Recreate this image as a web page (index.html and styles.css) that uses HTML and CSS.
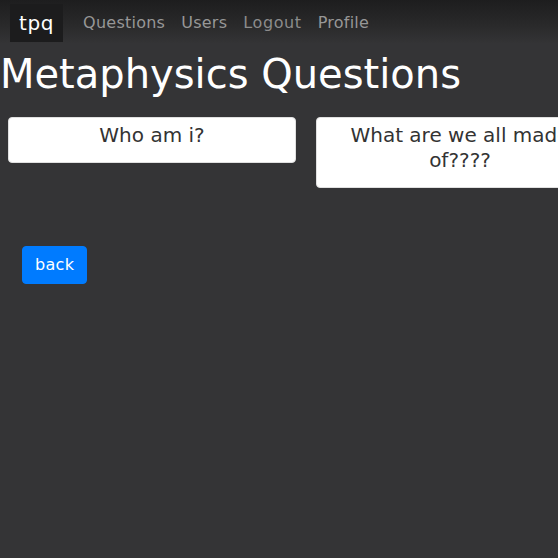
FILE: index.html
```html
<!DOCTYPE html>
<html>
<head>
<meta charset="utf-8">
<title>tpq</title>
<link rel="stylesheet" href="styles.css">
</head>
<body>
<nav class="navbar">
  <a class="brand" href="#">tpq</a>
  <ul class="nav">
    <li><a class="nav-link strong" href="#">Questions</a></li>
    <li><a class="nav-link strong" href="#">Users</a></li>
    <li><a class="nav-link light" href="#">Logout</a></li>
    <li><a class="nav-link strong" href="#">Profile</a></li>
  </ul>
</nav>
<h1 class="title">Metaphysics Questions</h1>
<div class="cards">
  <div class="card">Who am i?</div>
  <div class="card">What are we all made of????</div>
</div>
<div class="actions">
  <a class="btn" href="#">back</a>
</div>
</body>
</html>
```
FILE: styles.css
```css
html {
  overflow: hidden;
  background: #343436;
}
body {
  margin: 0;
  min-height: 558px;
  background: #343436;
  font-family: "DejaVu Sans", sans-serif;
  color: #fff;
}
.navbar {
  height: 44px;
  display: flex;
  align-items: center;
  padding: 0 10px;
  background: linear-gradient(to bottom, #1d1d1e 0%, #2a2a2b 60%, #343436 100%);
}
.brand {
  display: block;
  margin-top: 2px;
  padding: 7px 9px;
  background: #1c1c1d;
  color: #fff;
  text-decoration: none;
  font-size: 20px;
  line-height: 24px;
  letter-spacing: 0.6px;
}
.nav {
  display: flex;
  list-style: none;
  margin: 2px 0 0 12px;
  padding: 0;
}
.nav-link {
  display: block;
  padding: 8px 8px;
  font-size: 16px;
  line-height: 24px;
  color: #8c8c8c;
  text-decoration: none;
  letter-spacing: 0.25px;
}
.nav-link.light {
  letter-spacing: 0.6px;
}
.nav-link.strong {
  font-weight: 500;
  color: #979797;
}
.title {
  margin: 6px 0 0;
  font-size: 40px;
  line-height: 48px;
  font-weight: normal;
}
.cards {
  display: flex;
  gap: 20px;
  padding-left: 8px;
  margin-top: 19px;
  align-items: flex-start;
}
.card {
  flex: 0 0 288px;
  box-sizing: border-box;
  background: #fff;
  border: 1px solid #e0e0e0;
  border-radius: 4px;
  padding: 5px 10px 14px;
  color: #333;
  font-size: 20px;
  line-height: 25px;
  text-align: center;
}
.actions {
  padding-left: 22px;
  margin-top: 58px;
}
.btn {
  display: inline-block;
  padding: 6px 12px;
  border: 1px solid #007bff;
  background: #007bff;
  color: #fff;
  border-radius: 4px;
  font-size: 16px;
  line-height: 24px;
  letter-spacing: 0.3px;
  text-decoration: none;
}
```
